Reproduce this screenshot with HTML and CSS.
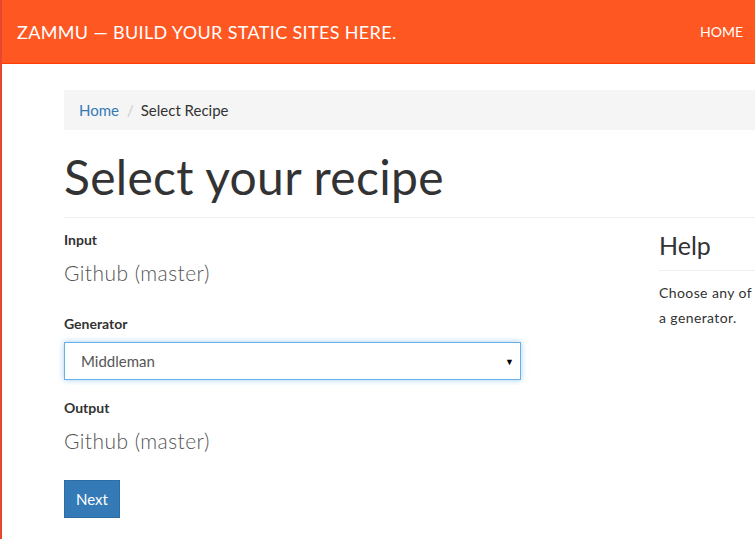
FILE: index.html
```html
<!DOCTYPE html>
<html>
<head>
<meta charset="utf-8">
<link rel="stylesheet" href="styles.css">
</head>
<body>
<div class="page">
  <nav class="navbar">
    <span class="brand">ZAMMU — BUILD YOUR STATIC SITES HERE.</span>
    <span class="nav-link">HOME</span>
  </nav>
  <div class="container">
    <ol class="breadcrumb">
      <li><a href="#">Home</a></li>
      <li class="sep">/</li>
      <li class="active">Select Recipe</li>
    </ol>
    <h1 class="page-title">Select your recipe</h1>
    <div class="row">
      <div class="main-col">
        <div class="label">Input</div>
        <div class="value">Github (master)</div>
        <div class="label label-gen">Generator</div>
        <div class="select">
          <span>Middleman</span>
          <span class="caret">▼</span>
        </div>
        <div class="label label-out">Output</div>
        <div class="value">Github (master)</div>
        <div><button class="btn">Next</button></div>
      </div>
      <div class="side-col">
        <h3 class="help-title">Help</h3>
        <p class="help-text">Choose any of a generator.</p>
      </div>
    </div>
  </div>
</div>
</body>
</html>
```
FILE: styles.css
```css
html, body {
  margin: 0;
  padding: 0;
  overflow: hidden;
}
body {
  font-family: "Lato", "Open Sans", sans-serif;
  color: #333;
  background: #fff;
}
.page {
  width: 1100px;
  border-left: 2px solid #e8472f;
  min-height: 539px;
}
.navbar {
  height: 63px;
  background: #ff5722;
  border-bottom: 1px solid #ff3d00;
  display: flex;
  align-items: center;
  justify-content: space-between;
  color: #fff;
  width: 753px;
}
.brand {
  font-size: 18px;
  padding-left: 15px;
  padding-top: 1px;
  letter-spacing: 0.35px;
}
.nav-link {
  font-size: 14px;
  padding-right: 12px;
}
.container {
  padding-left: 62px;
}
.breadcrumb {
  list-style: none;
  margin: 26px 0 0;
  padding: 0 15px;
  height: 40px;
  background: #f5f5f5;
  display: flex;
  align-items: center;
  font-size: 15px;
}
.breadcrumb a {
  color: #337ab7;
  text-decoration: none;
}
.breadcrumb .sep {
  color: #ccc;
  padding: 0 7px 0 8px;
}
.page-title {
  font-weight: 400;
  font-size: 48px;
  letter-spacing: 0.3px;
  margin: 18px 0 0;
  padding-bottom: 11px;
  border-bottom: 1px solid #eee;
  line-height: 58px;
}
.row {
  display: flex;
}
.main-col {
  width: 595px;
  display: flex;
  flex-direction: column;
  align-items: flex-start;
}
.label {
  font-weight: 700;
  font-size: 14px;
  line-height: 20px;
  margin-top: 12px;
}
.label-gen {
  margin-top: 27px;
}
.label-out {
  margin-top: 18px;
}
.value {
  font-size: 21px;
  font-weight: 300;
  letter-spacing: 0.45px;
  color: #555;
  margin-top: 9px;
  line-height: 28px;
}
.select {
  margin-top: 8px;
  width: 457px;
  height: 38px;
  box-sizing: border-box;
  border: 1px solid #66afe9;
  box-shadow: 0 0 6px rgba(102, 175, 233, 0.6);
  display: flex;
  align-items: center;
  justify-content: space-between;
  padding: 0 6px 0 16px;
  font-size: 15px;
  color: #555;
}
.caret {
  font-size: 9px;
  color: #000;
}
.btn {
  margin-top: 25px;
  background: #337ab7;
  border: 1px solid #2e6da4;
  color: #fff;
  font-family: inherit;
  font-size: 15px;
  height: 38px;
  padding: 0 11px;
}
.side-col {
  width: 96px;
}
.help-title {
  font-weight: 400;
  font-size: 25px;
  margin: 12px 0 0;
  padding-bottom: 10px;
  border-bottom: 1px solid #eee;
  margin-right: -400px;
}
.help-text {
  font-size: 14px;
  letter-spacing: 0.4px;
  line-height: 25px;
  margin: 9px 0 0;
}
```
